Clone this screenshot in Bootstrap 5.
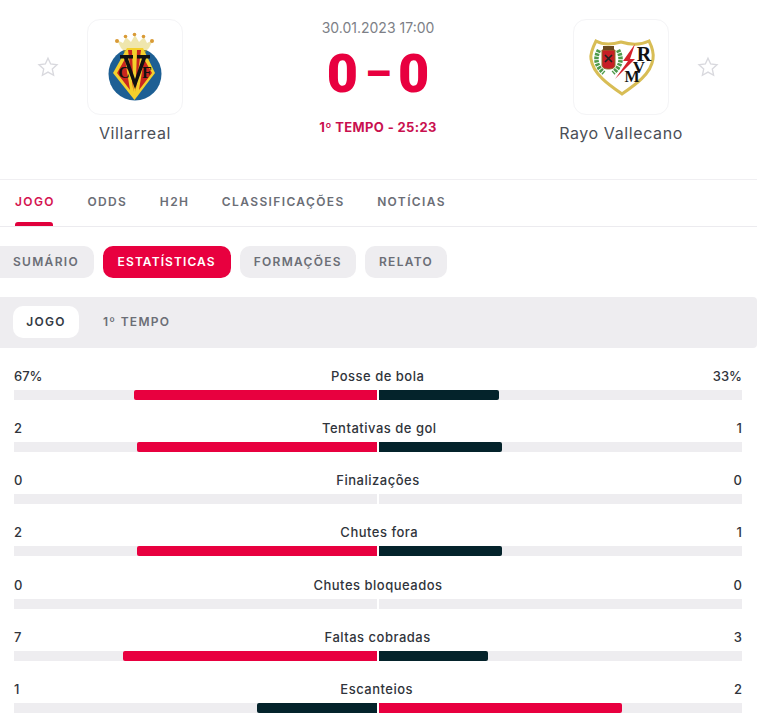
<!DOCTYPE html>
<html lang="pt">
<head>
<meta charset="utf-8">
<title>Villarreal x Rayo Vallecano</title>
<link href="https://cdn.jsdelivr.net/npm/bootstrap@5.3.0/dist/css/bootstrap.min.css" rel="stylesheet">
<style>
html,body{overflow:hidden;height:724px;background:#fff}
body{font-family:Inter,"Liberation Sans",sans-serif;color:#2a2e36}
.page-wrap{width:757px}
.match-head{height:180px;padding:19px 38px 0 37px;border-bottom:1px solid #f0eff2}
.team-side{gap:28px}
.fav-star{width:22px;height:22px;margin-top:37px;flex:none}
.team-block{width:96px}
.logo-box{width:96px;height:96px;border:1px solid #f4f4f6;border-radius:13px;background:#fff}
.logo-box svg{display:block}
.team-name{white-space:nowrap;font-size:16px;line-height:20px;margin-top:8px;letter-spacing:.6px;color:#4b4f57}
.match-date{font-size:14px;line-height:18px;color:#7d7f87}
.score-line{font-family:Roboto,sans-serif;font-weight:900;font-size:54px;line-height:48px;color:#e8003f;gap:7px;margin-top:13px}
.score-dash{font-size:42px;line-height:48px}
.match-time{font-size:13px;line-height:16px;font-weight:700;color:#c9104f;letter-spacing:.35px;margin-top:21px}
.main-tabs{height:47px;padding-left:15px;gap:32.5px;border-bottom:1px solid #ecebef}
.main-tab{font-size:12px;font-weight:600;letter-spacing:1.38px;color:#6b6e76;line-height:44px;height:46px;position:relative}
.main-tab.on{color:#d4124f}
.main-tab.on::after{content:"";position:absolute;left:0;right:2px;bottom:0;height:4px;background:#e0003c;border-radius:3px 3px 0 0}
.sub-tabs{gap:9px;margin-top:19px}
.sub-pill{height:32px;line-height:32px;border-radius:10px;background:#eeedf0;font-size:12px;font-weight:600;letter-spacing:1.3px;color:#6b6e76;padding:0 14px}
.sub-pill.first{padding:0 14.7px 0 13px;border-radius:0 10px 10px 0}
.sub-pill.on{background:#e8003f;color:#fff;letter-spacing:1.1px;padding:0 15px}
.period-bar{height:51px;margin-top:19px;background:#eeedf0;padding:9px 13px;gap:24px;border-radius:0 4px 4px 0}
.period-item{height:32px;line-height:32px;font-size:12px;font-weight:600;letter-spacing:1.3px;color:#6b6e76}
.period-item.on{background:#fff;color:#333a44;border-radius:10px;width:66px;text-align:center}
.stats-list{padding:0 15px 0 14px;margin-top:18px}
.stat-row{height:52.17px}
.stat-text{font-size:13px;line-height:20px;font-weight:500;color:#30343b;height:19px}
.stat-label{letter-spacing:.5px}
.stat-track{height:10px;margin-top:5px;gap:2px}
.track-half{flex:1 1 0;background:#eeedf0}
.fill-red{background:#e8003f;height:100%}
.fill-dark{background:#04232b;height:100%}
.track-left .fill-red,.track-left .fill-dark{border-radius:2px 0 0 2px}
.track-right .fill-red,.track-right .fill-dark{border-radius:0 2px 2px 0}
</style>
</head>
<body>
<div class="page-wrap">
  <header class="match-head d-flex justify-content-between">
    <div class="team-side d-flex align-items-start">
      <svg class="fav-star" viewBox="0 0 24 24" fill="none" stroke="#d9d9de" stroke-width="1.5"><path d="M12 2.4l2.900 6.300 6.900.8-5.100 4.700 1.400 6.800-6.100-3.400-6.100 3.400 1.400-6.800-5.100-4.700 6.900-.8z"/></svg>
      <div class="team-block d-flex flex-column align-items-center">
        <div class="logo-box">
          <svg width="94" height="94" viewBox="1 1 94 94">
            <circle cx="48" cy="55" r="26.500" fill="#1d5f94"/>
            <path d="M30 21l6 3 3-6 5 5 4-7 4 7 5-5 3 6 6-3-4 8-4 4H38l-4-4z" fill="#efe6ad"/>
            <path d="M36 31h24l-3 5H39z" fill="#7f8a4a"/>
            <g fill="#d99a35"><circle cx="47.500" cy="15.500" r="1.800"/><circle cx="38.500" cy="17.500" r="1.800"/><circle cx="56.500" cy="17.500" r="1.800"/><circle cx="30" cy="22" r="2"/><circle cx="65" cy="22" r="2"/></g>
            <path d="M40 29h16l12 25-20.500 27L26 54z" fill="#f4d02c"/>
            <path d="M41 31h4l1.500 42zM54 31h-4l-1.500 42zM38 40l-8 14 13 17zM57 40l8 14-13 17z" fill="#c8261f"/>
            <path d="M33 36h13v3.500h-5L48 60l7-20.500h-5V36h13v3.500h-4L48 70 37 39.500h-4z" fill="#111"/>
            <text x="37" y="59" font-family="Liberation Serif,serif" font-weight="700" font-size="16" text-anchor="middle" fill="#111">C</text>
            <text x="60" y="59" font-family="Liberation Serif,serif" font-weight="700" font-size="16" text-anchor="middle" fill="#111">F</text>
          </svg>
        </div>
        <div class="team-name">Villarreal</div>
      </div>
    </div>
    <div class="d-flex flex-column align-items-center">
      <div class="match-date">30.01.2023 17:00</div>
      <div class="score-line d-flex align-items-center"><span>0</span><span class="score-dash">–</span><span>0</span></div>
      <div class="match-time">1º TEMPO - 25:23</div>
    </div>
    <div class="team-side d-flex align-items-start">
      <div class="team-block d-flex flex-column align-items-center">
        <div class="logo-box">
          <svg width="94" height="94" viewBox="1 1 94 94">
            <path d="M23 22C30 26 38 26 48 23C58 26 68 26 76 22C79 28 81 34 80 40C78 55 62 66 49 75C36 66 20 55 18 40C17 34 20 28 23 22Z" fill="#fff" stroke="#d8bd55" stroke-width="3"/>
            <path d="M26 31Q19 44 31 54M45 31Q52 44 40 54" fill="none" stroke="#4e9a4a" stroke-width="4.500" stroke-dasharray="2.500 1"/>
            <path d="M29 31h13v15c0 3-3 4-6.500 4S29 49 29 46z" fill="#c71e26" stroke="#8f6b25"/>
            <rect x="30" y="27" width="11" height="4" fill="#6b4a1e"/>
            <path d="M32 43l7-7M39 43l-7-7" stroke="#222" stroke-width="1.700"/>
            <path d="M62 25L50 42h5L42 60l20-20h-5z" fill="#d5212b"/>
            <text x="71" y="42" font-family="Liberation Serif,serif" font-weight="700" font-size="20" text-anchor="middle" fill="#111">R</text>
            <text x="66" y="54" font-family="Liberation Serif,serif" font-weight="700" font-size="17" text-anchor="middle" fill="#111">V</text>
            <text x="59" y="63" font-family="Liberation Serif,serif" font-weight="700" font-size="16" text-anchor="middle" fill="#111">M</text>
          </svg>
        </div>
        <div class="team-name">Rayo Vallecano</div>
      </div>
      <svg class="fav-star" viewBox="0 0 24 24" fill="none" stroke="#d9d9de" stroke-width="1.5"><path d="M12 2.4l2.900 6.300 6.900.8-5.100 4.700 1.400 6.800-6.100-3.400-6.100 3.400 1.400-6.800-5.100-4.700 6.900-.8z"/></svg>
    </div>
  </header>

  <nav class="main-tabs d-flex">
    <div class="main-tab on">JOGO</div>
    <div class="main-tab">ODDS</div>
    <div class="main-tab">H2H</div>
    <div class="main-tab">CLASSIFICAÇÕES</div>
    <div class="main-tab">NOTÍCIAS</div>
  </nav>

  <div class="sub-tabs d-flex">
    <div class="sub-pill first">SUMÁRIO</div>
    <div class="sub-pill on">ESTATÍSTICAS</div>
    <div class="sub-pill">FORMAÇÕES</div>
    <div class="sub-pill">RELATO</div>
  </div>

  <div class="period-bar d-flex">
    <div class="period-item on">JOGO</div>
    <div class="period-item">1º TEMPO</div>
  </div>

  <section class="stats-list">
    <div class="stat-row">
      <div class="stat-text d-flex justify-content-between"><span>67%</span><span class="stat-label">Posse de bola</span><span>33%</span></div>
      <div class="stat-track d-flex"><div class="track-half track-left d-flex justify-content-end"><div class="fill-red" style="width:67%"></div></div><div class="track-half track-right"><div class="fill-dark" style="width:33%"></div></div></div>
    </div>
    <div class="stat-row">
      <div class="stat-text d-flex justify-content-between"><span>2</span><span class="stat-label">Tentativas de gol</span><span>1</span></div>
      <div class="stat-track d-flex"><div class="track-half track-left d-flex justify-content-end"><div class="fill-red" style="width:66%"></div></div><div class="track-half track-right"><div class="fill-dark" style="width:34%"></div></div></div>
    </div>
    <div class="stat-row">
      <div class="stat-text d-flex justify-content-between"><span>0</span><span class="stat-label">Finalizações</span><span>0</span></div>
      <div class="stat-track d-flex"><div class="track-half track-left"></div><div class="track-half track-right"></div></div>
    </div>
    <div class="stat-row">
      <div class="stat-text d-flex justify-content-between"><span>2</span><span class="stat-label">Chutes fora</span><span>1</span></div>
      <div class="stat-track d-flex"><div class="track-half track-left d-flex justify-content-end"><div class="fill-red" style="width:66%"></div></div><div class="track-half track-right"><div class="fill-dark" style="width:34%"></div></div></div>
    </div>
    <div class="stat-row">
      <div class="stat-text d-flex justify-content-between"><span>0</span><span class="stat-label">Chutes bloqueados</span><span>0</span></div>
      <div class="stat-track d-flex"><div class="track-half track-left"></div><div class="track-half track-right"></div></div>
    </div>
    <div class="stat-row">
      <div class="stat-text d-flex justify-content-between"><span>7</span><span class="stat-label">Faltas cobradas</span><span>3</span></div>
      <div class="stat-track d-flex"><div class="track-half track-left d-flex justify-content-end"><div class="fill-red" style="width:70%"></div></div><div class="track-half track-right"><div class="fill-dark" style="width:30%"></div></div></div>
    </div>
    <div class="stat-row">
      <div class="stat-text d-flex justify-content-between"><span>1</span><span class="stat-label">Escanteios</span><span>2</span></div>
      <div class="stat-track d-flex"><div class="track-half track-left d-flex justify-content-end"><div class="fill-dark" style="width:33%"></div></div><div class="track-half track-right"><div class="fill-red" style="width:67%"></div></div></div>
    </div>
  </section>
</div>
<script src="https://cdn.jsdelivr.net/npm/bootstrap@5.3.0/dist/js/bootstrap.bundle.min.js"></script>
</body>
</html>
